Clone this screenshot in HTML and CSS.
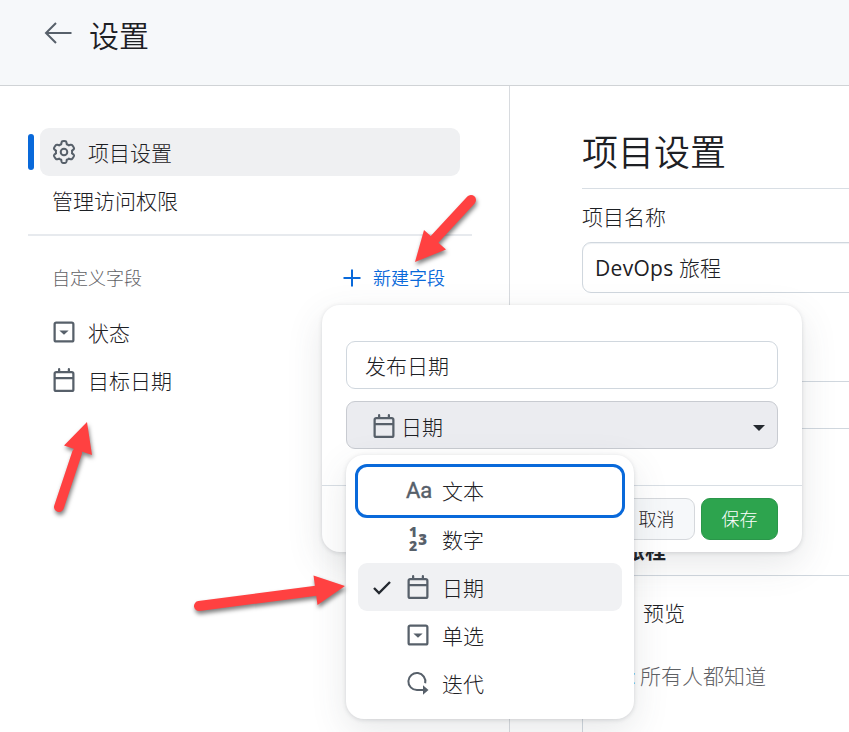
FILE: index.html
```html
<!DOCTYPE html>
<html lang="zh-CN">
<head>
<meta charset="utf-8">
<title>设置</title>
<link rel="stylesheet" href="styles.css">
</head>
<body>
<svg class="defs" aria-hidden="true">
  <symbol id="calendar" viewBox="0 0 16 16"><path fill-rule="evenodd" d="M4.75 0a.75.75 0 01.75.75V2h5V.75a.75.75 0 011.5 0V2h1.25c.966 0 1.75.784 1.75 1.75v10.5A1.75 1.75 0 0113.25 16H2.75A1.75 1.75 0 011 14.25V3.75C1 2.784 1.784 2 2.75 2H4V.75A.75.75 0 014.75 0zm0 3.5h-2a.25.25 0 00-.25.25V6h11V3.75a.25.25 0 00-.25-.25h-8.5zM13.5 7.5h-11v6.75c0 .138.112.25.25.25h10.5a.25.25 0 00.25-.25V7.5z"/></symbol>
  <symbol id="select" viewBox="0 0 16 16"><path fill-rule="evenodd" d="M4.900 7h6.200L8 9.800zM2.750 1h10.500c.966 0 1.750.784 1.750 1.750v10.500A1.750 1.750 0 0113.250 15H2.750A1.750 1.750 0 011 13.250V2.750C1 1.784 1.784 1 2.750 1zm0 1.500a.25.25 0 00-.25.25v10.500c0 .138.112.25.25.25h10.500a.25.25 0 00.25-.25V2.750a.25.25 0 00-.25-.25z"/></symbol>
</svg>

<header class="top">
  <svg class="back" viewBox="0 0 28 22"><path d="M12 1 2 11l10 10M2 11h25.500"/></svg>
  <span class="top-title">设置</span>
</header>

<div class="layout">
  <aside class="side">
    <div class="nav-current">
      <svg class="icon" viewBox="0 0 24 24"><g class="stroke"><circle cx="12" cy="12" r="3.300"/><path d="M10.400 1.200Q12 .8 13.600 1.200Q14.200 1.400 14.400 2.200L14.800 4.300Q15.900 4.700 16.700 5.300L18.700 4.700Q19.500 4.500 20 5Q21.400 6.500 22 8Q22.200 8.800 21.600 9.400L20 10.700Q20.200 12 20 13.300L21.600 14.600Q22.200 15.200 22 16Q21.400 17.500 20 19Q19.500 19.500 18.700 19.300L16.700 18.700Q15.900 19.300 14.800 19.700L14.400 21.800Q14.200 22.600 13.600 22.800Q12 23.200 10.400 22.800Q9.800 22.600 9.600 21.800L9.200 19.700Q8.100 19.300 7.300 18.700L5.300 19.300Q4.500 19.500 4 19Q2.600 17.500 2 16Q1.800 15.200 2.400 14.600L4 13.300Q3.800 12 4 10.700L2.400 9.400Q1.800 8.800 2 8Q2.600 6.500 4 5Q4.500 4.500 5.300 4.700L7.300 5.300Q8.100 4.700 9.200 4.300L9.600 2.200Q9.800 1.400 10.400 1.200Z"/></g></svg>
      <span class="text">项目设置</span>
    </div>
    <div class="nav-link">管理访问权限</div>
    <div class="fields-head">
      <span>自定义字段</span>
      <span class="new-field"><svg class="plus" viewBox="0 0 18 18"><path d="M9 .5v17M.5 9h17"/></svg>新建字段</span>
    </div>
    <div class="field"><svg class="icon"><use href="#select"/></svg><span class="text">状态</span></div>
    <div class="field"><svg class="icon"><use href="#calendar"/></svg><span class="text">目标日期</span></div>
  </aside>

  <main class="main">
    <h1>项目设置</h1>
    <div class="label">项目名称</div>
    <div class="input"><span class="latin">DevOps</span> 旅程</div>
    <div class="description"></div>
    <div class="readme-rule"></div>
    <div class="readme-title">旅程</div>
    <div class="editor">
      <div class="tab">预览</div>
      <div class="content"><span class="mark">:</span>所有人都知道</div>
    </div>
  </main>
</div>

<section class="dialog">
  <div class="dialog-body">
    <div class="name-input">发布日期</div>
    <div class="type-select"><svg class="icon"><use href="#calendar"/></svg><span class="text">日期</span><i class="caret"></i></div>
  </div>
  <div class="dialog-foot">
    <span class="btn">取消</span>
    <span class="btn primary">保存</span>
  </div>
</section>

<div class="menu">
  <div class="option focused"><i class="slot"></i><span class="glyph-aa">Aa</span><span>文本</span></div>
  <div class="option"><i class="slot"></i><span class="glyph-num"><span class="frac"><b>1</b><b>2</b></span><b>3</b></span><span class="text">数字</span></div>
  <div class="option selected"><i class="slot"><svg class="check" viewBox="0 0 20 15"><path d="M2 8l5 5L18 2"/></svg></i><svg class="icon"><use href="#calendar"/></svg><span class="text">日期</span></div>
  <div class="option"><i class="slot"></i><svg class="icon"><use href="#select"/></svg><span class="text">单选</span></div>
  <div class="option"><i class="slot"></i><svg class="icon" viewBox="0 0 24 24"><path class="loop" d="M19.200 12.200A8.500 8.500 0 1 0 11 19H17"/><path d="M17 14.200 22.500 19 17 23.800z"/></svg><span class="text">迭代</span></div>
</div>

<svg class="arrows" viewBox="0 0 849 732">
  <path class="shaft" d="M471 200 433 241M59 507 77 453M199 606 318 590.500"/>
  <path d="M415 262 424 230 446 249.500zM87 422 64 445.500 92 455zM345 586 313.500 575.500 317.500 605z"/>
</svg>
</body>
</html>
```
FILE: styles.css
```css
* { box-sizing: border-box; }
html { overflow: hidden; }
body {
  position: relative;
  width: 849px;
  height: 732px;
  margin: 0;
  overflow: hidden;
  background: #fff;
  color: #1d2024;
  font: 300 21px/30px "Open Sans", "Noto Sans CJK SC", sans-serif;
}
.defs { position: absolute; width: 0; height: 0; }
.icon { flex: none; width: 24px; height: 24px; fill: #57606a; }
.stroke { fill: none; stroke: #57606a; stroke-width: 2; }
.text { padding-top: 2px; }

.top {
  display: flex;
  align-items: flex-start;
  height: 86px;
  padding: 22px 0 0 44px;
  background: #f6f8fa;
  border-bottom: 1px solid #d0d3d6;
}
.back { width: 28px; height: 22px; margin-right: 17px; fill: none; stroke: #57606a; stroke-width: 2; }
.top-title { font-size: 30px; font-weight: 350; line-height: 28px; }

.layout { display: flex; height: 646px; }
.side { width: 510px; padding: 42px 37px 0 28px; border-right: 1px solid #d8dbdf; }
.nav-current {
  position: relative;
  display: flex;
  align-items: center;
  gap: 12px;
  width: 420px;
  height: 48px;
  margin-left: 12px;
  padding-left: 12px;
  border-radius: 9px;
  background: #eff0f2;
}
.nav-current::before {
  content: "";
  position: absolute;
  left: -12px;
  top: 6px;
  width: 6px;
  height: 36px;
  border-radius: 3px;
  background: #0969da;
}
.nav-link { height: 60px; padding: 10px 24px; border-bottom: 2px solid #e7eaee; }
.fields-head {
  display: flex;
  justify-content: space-between;
  height: 72px;
  padding: 27px 27px 0 24px;
  font-size: 18px;
  color: #5f6165;
}
.new-field { display: flex; align-items: center; gap: 12px; height: 30px; color: #0969da; font-weight: 350; }
.plus { width: 18px; height: 18px; stroke: #0969da; stroke-width: 2; }
.field { display: flex; align-items: center; gap: 12px; height: 48px; padding-left: 24px; }

.main { width: 339px; padding: 38px 0 0 72px; overflow: hidden; }
h1 {
  height: 65px;
  margin: 0;
  border-bottom: 1px solid #d8dee4;
  font-size: 36px;
  font-weight: 350;
  line-height: 57px;
}
.label { height: 53px; padding-top: 13px; }
.input {
  width: 400px;
  height: 51px;
  padding: 10px 12px;
  border: 1px solid #d0d7de;
  border-radius: 9px;
  box-shadow: inset 0 1px 1px #eef1f4;
}
.latin { font-weight: 400; letter-spacing: .3px; }
.description { height: 89px; border-bottom: 1px solid #d0d7de; }
.readme-rule { height: 47px; border-bottom: 1px solid #d0d7de; }
.readme-title { width: 84px; height: 146px; padding-top: 106px; font-weight: 700; text-align: right; }
.editor { width: 400px; height: 200px; padding: 22px 0 0 57px; border: 1px solid #d0d7de; }
.tab { padding-left: 3px; }
.content { position: relative; margin-top: 33px; color: #5f6165; }
.mark { position: absolute; left: -9px; color: #0969da; }

.dialog {
  position: absolute;
  left: 322px;
  top: 305px;
  width: 480px;
  height: 247px;
  border-radius: 18px;
  background: #fff;
  box-shadow: 0 1px 4px rgba(66, 74, 83, .18), 0 12px 36px rgba(66, 74, 83, .13);
}
.dialog-body { display: flex; flex-direction: column; gap: 12px; height: 181px; padding: 36px 24px 0; border-bottom: 1px solid #d8dee4; }
.name-input { height: 48px; padding: 9px 18px; border: 1px solid #d0d7de; border-radius: 9px; }
.type-select {
  display: flex;
  align-items: center;
  gap: 5px;
  height: 48px;
  padding: 2px 12px 0 25px;
  border: 1px solid #c8cbd1;
  border-radius: 9px;
  background: #ebecf0;
}
.caret { margin: 4px 0 0 auto; border: 6px solid transparent; border-top-color: #24292f; border-bottom: 0; }
.dialog-foot { display: flex; justify-content: flex-end; gap: 6px; padding: 12px 24px; font-size: 18px; }
.btn {
  width: 77px;
  height: 42px;
  border: 1px solid #d5d8dc;
  border-radius: 9px;
  background: #f6f8fa;
  line-height: 40px;
  text-align: center;
}
.primary { border-color: #2a964a; background: #2da44e; color: #fff; }

.menu {
  position: absolute;
  left: 346px;
  top: 455px;
  width: 288px;
  height: 264px;
  padding: 9px;
  border-radius: 18px;
  background: #fff;
  box-shadow: 0 1px 4px rgba(66, 74, 83, .18), 0 12px 36px rgba(66, 74, 83, .13);
}
.option { display: flex; align-items: center; height: 48px; margin: 0 3px; padding-left: 12px; border-radius: 9px; }
.option > :nth-child(2) { margin-right: 12px; }
.focused { height: 54px; margin: 0 0 -3px; padding-left: 12px; border: 3px solid #0969da; border-radius: 12px; }
.selected { background: #f0f1f3; }
.slot { display: flex; width: 36px; padding-left: 2px; }
.check { width: 20px; height: 15px; fill: none; stroke: #24292f; stroke-width: 2.4; }
.loop { fill: none; stroke: #57606a; stroke-width: 2; }
.glyph-aa { width: 24px; color: #57606a; font: 400 22px/24px Roboto, sans-serif; -webkit-text-stroke: .4px #57606a; }
.glyph-num { display: flex; align-items: center; justify-content: center; gap: 1px; width: 24px; color: #57606a; font: 700 14px/14px "Noto Sans", sans-serif; }
.frac { display: flex; flex-direction: column; }
.glyph-num > b { font-size: 15px; }

.arrows {
  position: absolute;
  left: 0;
  top: 0;
  width: 849px;
  height: 732px;
  fill: #ff4141;
  filter: drop-shadow(1px 3px 2px rgba(0, 0, 0, .5));
}
.shaft { fill: none; stroke: #ff4141; stroke-width: 10; stroke-linecap: round; }
```
